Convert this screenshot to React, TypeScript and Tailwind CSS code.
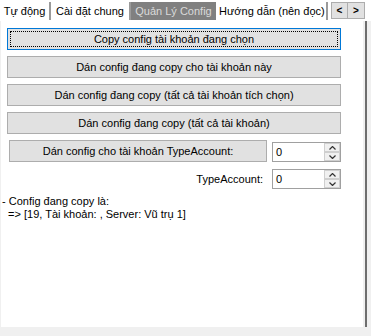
import React from 'react';

const tabs = [
  { label: 'Tự động', w: 'w-[51px]' },
  { label: 'Cài đặt chung', w: 'w-[80px]' },
  { label: 'Quản Lý Config', w: 'w-[85px]', active: true },
  { label: 'Hướng dẫn (nên đọc)', w: 'w-[112px]' },
];

const pasteButtons = [
  'Dán config đang copy cho tài khoản này',
  'Dán config đang copy (tất cả tài khoản tích chọn)',
  'Dán config đang copy (tất cả tài khoản)',
];

function SpinBox({ value }: { value: string }) {
  return (
    <div className="flex h-[20px] w-[69px] border border-[#a0a0a0] bg-white">
      <div className="flex-1 pl-[3px] leading-[18px]">{value}</div>
      <div className="flex w-[16px] flex-col">
        <div className="flex h-[9px] items-center justify-center border border-[#cfcfcf] bg-[#f0f0f0]">
          <svg width="7" height="4" viewBox="0 0 7 4">
            <path d="M0.5 3.5 L3.5 0.5 L6.5 3.5" stroke="#333" strokeWidth="1.2" fill="none" />
          </svg>
        </div>
        <div className="flex h-[9px] items-center justify-center border border-[#cfcfcf] bg-[#f0f0f0]">
          <svg width="7" height="4" viewBox="0 0 7 4">
            <path d="M0.5 0.5 L3.5 3.5 L6.5 0.5" stroke="#333" strokeWidth="1.2" fill="none" />
          </svg>
        </div>
      </div>
    </div>
  );
}

export default function App() {
  return (
    <div
      className="flex h-[336px] w-[371px] flex-col overflow-hidden bg-white text-[11px] text-black"
      style={{ fontFamily: '"Liberation Sans", Arial, sans-serif' }}
    >
      {/* tab strip */}
      <div className="flex h-[21px] items-start pt-[2px]">
        {tabs.map((t) => (
          <div
            key={t.label}
            className={`${t.w} h-[18px] shrink-0 whitespace-nowrap px-[3px] leading-[18px] ${
              t.active
                ? 'bg-[#808080] text-[#dadada] text-center'
                : 'border-r-2 border-[#9a9a9a] bg-white text-center'
            }`}
          >
            {t.label}
          </div>
        ))}
        <div className="ml-[3px] flex">
          <div className="flex h-[17px] w-[17px] items-center justify-center border border-[#adadad] bg-[#e1e1e1] text-[10px] font-bold">
            &lt;
          </div>
          <div className="flex h-[17px] w-[17px] items-center justify-center border border-l-0 border-[#adadad] bg-[#e1e1e1] text-[10px] font-bold">
            &gt;
          </div>
        </div>
      </div>

      {/* body */}
      <div className="flex h-[306px]">
        <div className="w-px bg-[#f0f0f0]" />
        <div className="flex w-[362px] flex-col bg-white px-[6px] pt-[7px]">
          <button className="h-[22px] w-[334px] border border-[#0078d7] bg-[#e1e1e1] outline-1 -outline-offset-4 outline-dotted outline-black">
            Copy config tài khoản đang chọn
          </button>
          {pasteButtons.map((b) => (
            <button key={b} className="mt-[6px] h-[22px] w-[334px] border border-[#adadad] bg-[#e1e1e1]">
              {b}
            </button>
          ))}
          <div className="mt-[6px] flex items-start">
            <button className="ml-[2px] h-[22px] w-[258px] border border-[#adadad] bg-[#e1e1e1]">
              Dán config cho tài khoản TypeAccount:
            </button>
            <div className="ml-[5px] mt-[2px]">
              <SpinBox value="0" />
            </div>
          </div>
          <div className="mt-[7px] flex items-center">
            <div className="w-[256px] text-right">TypeAccount:</div>
            <div className="ml-[9px]">
              <SpinBox value="0" />
            </div>
          </div>
          <div className="-ml-[5px] mt-[6px] whitespace-pre leading-[13px]">
            {'- Config đang copy là:\n  => [19, Tài khoản: , Server: Vũ trụ 1]'}
          </div>
        </div>
        <div className="flex w-[8px] bg-[#f0f0f0]">
          <div className="ml-[2px] w-[2px] bg-[#6e6e6e]" />
        </div>
      </div>

      <div className="flex-1 bg-[#f0f0f0]" />
    </div>
  );
}
